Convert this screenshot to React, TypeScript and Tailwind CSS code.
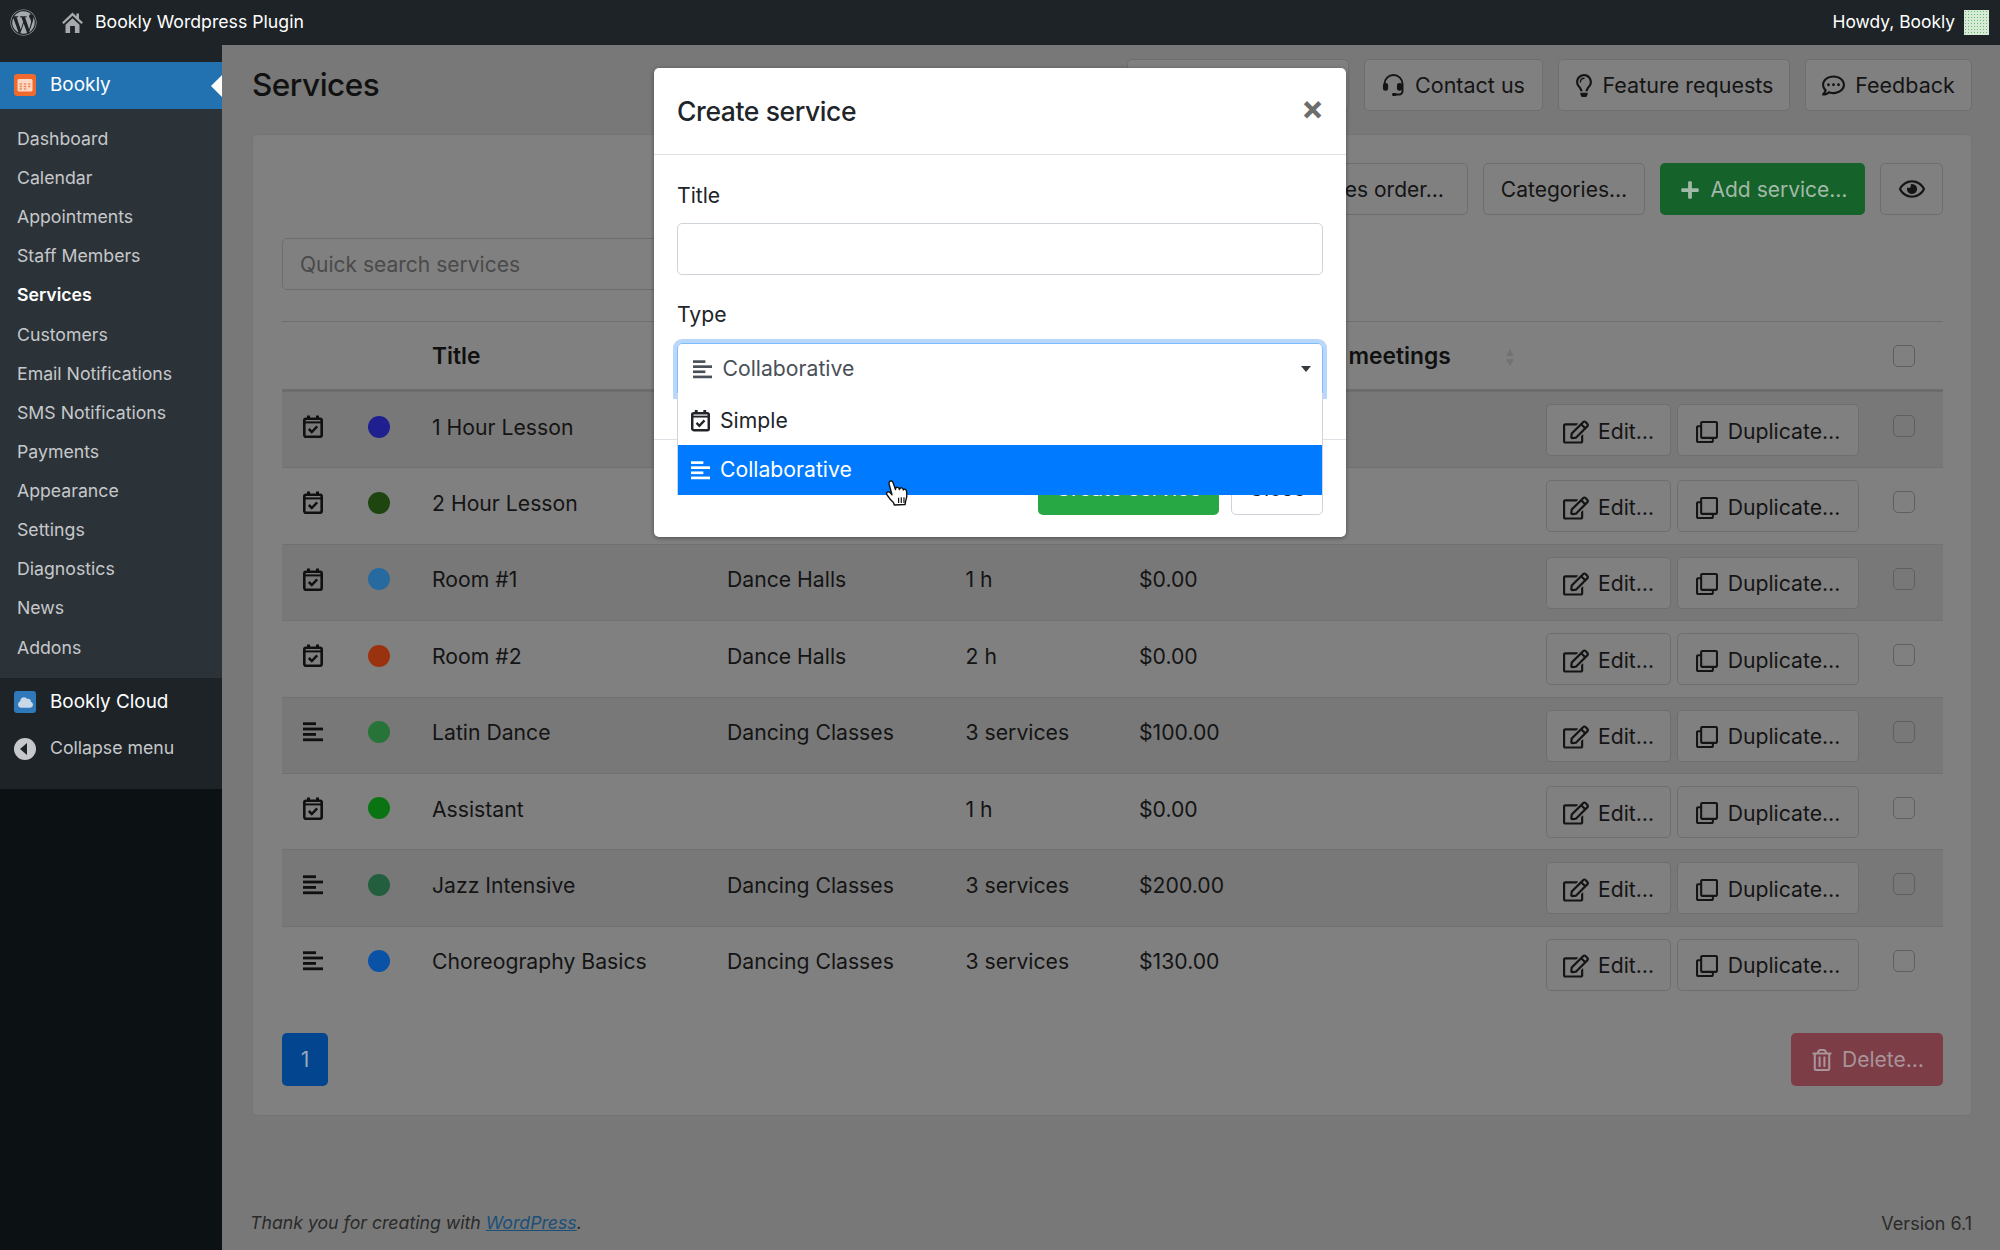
import { FaWordpress, FaCloud, FaRegEdit, FaRegClone, FaRegLightbulb, FaRegCommentDots, FaRegEye, FaRegTrashAlt, FaPlus } from "react-icons/fa";

const MENU = [
  "Dashboard",
  "Calendar",
  "Appointments",
  "Staff Members",
  "Services",
  "Customers",
  "Email Notifications",
  "SMS Notifications",
  "Payments",
  "Appearance",
  "Settings",
  "Diagnostics",
  "News",
  "Addons",
];

type Row = { kind: "simple" | "collab"; color: string; title: string; category: string; duration: string; price: string };

const ROWS: Row[] = [
  { kind: "simple", color: "bg-[#1f1f8f]", title: "1 Hour Lesson", category: "", duration: "1 h", price: "$0.00" },
  { kind: "simple", color: "bg-[#1e4410]", title: "2 Hour Lesson", category: "", duration: "2 h", price: "$0.00" },
  { kind: "simple", color: "bg-[#266a9f]", title: "Room #1", category: "Dance Halls", duration: "1 h", price: "$0.00" },
  { kind: "simple", color: "bg-[#9a320f]", title: "Room #2", category: "Dance Halls", duration: "2 h", price: "$0.00" },
  { kind: "collab", color: "bg-[#287438]", title: "Latin Dance", category: "Dancing Classes", duration: "3 services", price: "$100.00" },
  { kind: "simple", color: "bg-[#0a7412]", title: "Assistant", category: "", duration: "1 h", price: "$0.00" },
  { kind: "collab", color: "bg-[#235f3e]", title: "Jazz Intensive", category: "Dancing Classes", duration: "3 services", price: "$200.00" },
  { kind: "collab", color: "bg-[#0a52a6]", title: "Choreography Basics", category: "Dancing Classes", duration: "3 services", price: "$130.00" },
];

function CalendarIcon({ className }: { className?: string }) {
  return (
    <svg viewBox="0 0 20 23" className={className} fill="none" stroke="currentColor">
      <rect x="1.300" y="3.800" width="17.400" height="17.900" rx="1.600" strokeWidth="2.600" />
      <path d="M1 7.400h18" strokeWidth="2" />
      <path d="M5.500 0.500v4M14.500 0.500v4" strokeWidth="3" />
      <path d="M5.800 14l3 3 5.400-5.600" strokeWidth="2.500" />
    </svg>
  );
}

function LinesIcon({ className }: { className?: string }) {
  return (
    <svg viewBox="0 0 20 20" className={className} fill="currentColor">
      <rect x="0" y="0.300" width="13" height="2.800" />
      <rect x="0" y="5.600" width="20" height="2.800" />
      <rect x="0" y="11" width="13" height="2.800" />
      <rect x="0" y="16.400" width="20" height="2.800" />
    </svg>
  );
}

function HeadsetIcon({ className }: { className?: string }) {
  return (
    <svg viewBox="0 0 24 24" className={className} fill="none" stroke="currentColor">
      <path d="M2.600 13V10.500a9.400 9.400 0 0 1 18.800 0V18a3.400 3.400 0 0 1-3.400 3.400h-4.500" strokeWidth="2" />
      <rect x="1" y="9.500" width="5.400" height="8" rx="2.500" fill="currentColor" stroke="none" />
      <rect x="15.600" y="9.500" width="5.400" height="8" rx="2.500" fill="currentColor" stroke="none" />
      <rect x="10.500" y="19.800" width="4.500" height="3.200" rx="1.400" fill="currentColor" stroke="none" />
    </svg>
  );
}

function HomeIcon({ className }: { className?: string }) {
  return (
    <svg viewBox="0 0 21 21" className={className} fill="currentColor">
      <path d="M10.500 0.500L0 10.500l1.700 1.600 8.800-8.300 8.800 8.300 1.700-1.600-4-3.800V1.500h-2.600v2.700z" />
      <path d="M3.500 12.800l7-6.600 7 6.600V21h-4.600v-7H8.100v7H3.500z" />
    </svg>
  );
}

function BooklyIcon() {
  return (
    <svg viewBox="0 0 22 22" className="h-[22px] w-[22px]">
      <rect width="22" height="22" rx="3" fill="#ef6a2c" />
      <rect x="3.500" y="5" width="15" height="12.500" rx="1.500" fill="#fbd9c6" />
      <path d="M5.500 10h2.500M9.800 10h2.500M14 10h2.500M5.500 12.500h2.500M9.800 12.500h2.500M14 12.500h2.500M5.500 15h2.500M9.800 15h2.500" stroke="#ef8a5c" strokeWidth="1.400" />
    </svg>
  );
}

function HandCursor({ className }: { className?: string }) {
  return (
    <svg viewBox="0 0 22 28" className={className} stroke="#111" strokeWidth="1.300" strokeLinejoin="round">
      <path
        d="M4 2.500c1-1.200 2.800-.7 3.300.8l2.300 6.600c-.2-1.500.9-2.400 2-2.100 1 .2 1.500 1 1.700 2 .1-1.200 1.200-1.900 2.200-1.500.9.300 1.300 1.100 1.400 2 .3-.8 1.200-1.100 1.900-.7.9.5 1.200 1.500 1.300 2.700.2 2.400 0 5.400-.9 7.700l-.7 3.800-10 .5-.8-2.300c-2-1.600-4.800-5.200-6-7.100-.7-1.100-.5-2.200.3-2.700.9-.5 2-.1 3 1l1.300 1.500L3.700 5.100c-.2-1-.2-2 .3-2.600z"
        fill="#fff"
      />
      <path d="M12.500 17.500v5M15 17v5.500M17.500 17v5.500" strokeWidth="1.100" fill="none" />
    </svg>
  );
}

function PlainButton({ children, className = "" }: { children?: React.ReactNode; className?: string }) {
  return (
    <div className={`flex h-[52px] shrink-0 items-center justify-center rounded-[5px] border border-[#6e6e6e] bg-[#808080] text-[#141414] ${className}`}>
      {children}
    </div>
  );
}

function Sidebar() {
  return (
    <aside className="flex w-[222px] shrink-0 flex-col bg-[#0c1214]">
      <div className="h-[17px] bg-[#1d2327]" />
      <div className="relative flex h-[47px] items-center bg-[#2271b1] pl-[14px] text-[18.900px] text-white">
        <BooklyIcon />
        <span className="ml-[14px]">Bookly</span>
        <span className="absolute right-0 top-[13px] h-0 w-0 border-y-[11px] border-r-[11px] border-y-transparent border-r-white" />
      </div>
      <ul className="flex h-[569.500px] flex-col bg-[#2c3338] pt-[11px] text-[17.700px] text-[#c6c8cb]">
        {MENU.map((item) => (
          <li key={item} className={`flex h-[39.150px] items-center pl-[17px] ${item === "Services" ? "font-semibold text-white" : ""}`}>
            {item}
          </li>
        ))}
      </ul>
      <div className="h-[111px] bg-[#1d2327]">
        <div className="mt-[13px] flex h-[22px] items-center pl-[14px] text-[18.900px] text-white">
          <span className="flex h-[22px] w-[22px] items-center justify-center rounded-[3px] bg-[#2f78b9]">
            <FaCloud className="h-[15px] w-[15px] text-[#c9d8e6]" />
          </span>
          <span className="ml-[14px]">Bookly Cloud</span>
        </div>
        <div className="mt-[24.500px] flex h-[22px] items-center pl-[14px] text-[17.700px] text-[#c6c8cb]">
          <span className="flex h-[22px] w-[22px] items-center justify-center rounded-full bg-[#c6c8cb]">
            <span className="mr-[3px] h-0 w-0 border-y-[6px] border-r-[7px] border-y-transparent border-r-[#1d2327]" />
          </span>
          <span className="ml-[14px]">Collapse menu</span>
        </div>
      </div>
    </aside>
  );
}

function ServiceRow({ row, striped, last }: { row: Row; striped: boolean; last: boolean }) {
  return (
    <div className={`flex h-[76.400px] text-[21.200px] text-[#141414] ${striped ? "bg-[#787878]" : ""} ${last ? "" : "border-b border-[#717171]"}`}>
      <div className="flex h-[69px] w-[150px] shrink-0 items-center">
        <span className="flex w-[61px] justify-center pl-[1px]">
          {row.kind === "simple" ? <CalendarIcon className="h-[23px] w-[20px] text-[#101010]" /> : <LinesIcon className="h-[20px] w-[20px] text-[#101010]" />}
        </span>
        <span className={`ml-[25px] h-[22px] w-[22px] rounded-full ${row.color}`} />
      </div>
      <div className="flex h-[71px] w-[295px] shrink-0 items-center">{row.title}</div>
      <div className="flex h-[71px] w-[238.500px] shrink-0 items-center">{row.category}</div>
      <div className="flex h-[71px] w-[173.500px] shrink-0 items-center">{row.duration}</div>
      <div className="flex h-[71px] w-[100px] shrink-0 items-center">{row.price}</div>
      <div className="ml-auto mt-[12px] flex gap-[6px]">
        <PlainButton className="w-[125px] gap-[9px] pt-[3px]">
          <FaRegEdit className="h-[24px] w-[26px]" />
          Edit…
        </PlainButton>
        <PlainButton className="w-[182px] gap-[10px] pt-[3px]">
          <FaRegClone className="h-[22px] w-[22px]" />
          Duplicate…
        </PlainButton>
      </div>
      <div className="ml-[34px] mr-[28px] mt-[23px] h-[22px] w-[22px] rounded-[5px] border border-[#5f5f5f]" />
    </div>
  );
}

function Modal() {
  return (
    <div className="absolute left-[654px] top-[68px] flex h-[469px] w-[692px] flex-col rounded-[5px] bg-white text-[21.200px] text-[#212529] shadow-[0_1px_4px_rgba(0,0,0,0.4)]">
      <div className="flex h-[87px] items-center justify-between border-b border-[#dee2e6] pl-[23px] pr-[22px]">
        <span className="pt-[2px] text-[26.500px] font-medium tracking-[-0.4px]">Create service</span>
        <span className="mb-[7px] text-[34px] font-bold leading-none text-[#6d6d6d]">×</span>
      </div>
      <div className="h-[284px] px-[23px]">
        <div className="mt-[24px] pt-[1px] leading-[30px]">Title</div>
        <div className="mt-[13px] h-[52px] rounded-[5px] border border-[#ced4da]" />
        <div className="mt-[24px] leading-[31px]">Type</div>
        <div className="relative mt-[13px]">
          <div className="flex h-[52px] items-center rounded-t-[5px] border border-[#80bdff] pl-[15px] text-[#495057] shadow-[0_0_0_4px_#b9d7fb]">
            <LinesIcon className="h-[19px] w-[19px]" />
            <span className="ml-[10.500px]">Collaborative</span>
            <span className="absolute right-[12px] top-[23px] h-0 w-0 border-x-[5.500px] border-t-[6.500px] border-x-transparent border-t-[#343a40]" />
          </div>
          <div className="absolute left-0 right-0 top-[50px] flex flex-col border-x border-[#ced4da] bg-white text-[#212529]">
            <div className="flex h-[52px] items-center pl-[13px] pt-[3px]">
              <CalendarIcon className="h-[23px] w-[19px]" />
              <span className="ml-[10px]">Simple</span>
            </div>
            <div className="flex h-[50px] items-center bg-[#007bff] pl-[13px] text-white">
              <LinesIcon className="h-[19px] w-[19px]" />
              <span className="ml-[10px]">Collaborative</span>
            </div>
            <HandCursor className="absolute left-[207px] top-[86px] h-[30px] w-[24px]" />
          </div>
        </div>
      </div>
      <div className="flex h-[98px] justify-end gap-[12px] border-t border-[#dee2e6] pr-[23px] pt-[23px]">
        <div className="flex h-[52px] w-[181px] items-center justify-center rounded-[5px] bg-[#28a745] text-white">Create service</div>
        <div className="flex h-[52px] w-[92px] items-center justify-center rounded-[5px] border border-[#ced4da]">Close</div>
      </div>
    </div>
  );
}

export default function App() {
  return (
    <div className="relative flex h-[1250px] w-[2000px] flex-col overflow-hidden bg-[#787878] font-['Inter',sans-serif]">
      <header className="flex h-[44.500px] shrink-0 items-center bg-[#1d2327] pl-[10px] pr-[11px] text-[17.700px] text-white">
        <FaWordpress className="h-[27px] w-[27px] text-[#a7aaad]" />
        <HomeIcon className="ml-[25px] h-[21px] w-[21px] text-[#a7aaad]" />
        <span className="ml-[12px]">Bookly Wordpress Plugin</span>
        <span className="ml-auto text-[17.400px]">Howdy, Bookly</span>
        <span className="ml-[9px] h-[25px] w-[25px] bg-[radial-gradient(#6fb872_35%,#d5ebd5_40%)] bg-[length:3px_3px]" />
      </header>
      <div className="flex min-h-0 flex-1">
        <Sidebar />
        <main className="flex min-w-0 flex-1 flex-col pl-[30px] pr-[28px] pt-[14.500px]">
          <div className="flex h-[52px] items-center gap-[15px] text-[21.500px] text-[#141414]">
            <h1 className="mr-auto text-[31.500px] font-medium tracking-[-0.5px] text-[#111]">Services</h1>
            <PlainButton className="w-[222px]" />
            <PlainButton className="w-[179px] gap-[10px]">
              <HeadsetIcon className="h-[23px] w-[23px]" />
              Contact us
            </PlainButton>
            <PlainButton className="w-[232px] gap-[10px]">
              <FaRegLightbulb className="h-[23px] w-[18px]" />
              Feature requests
            </PlainButton>
            <PlainButton className="w-[167px] gap-[10px]">
              <FaRegCommentDots className="h-[23px] w-[23px]" />
              Feedback
            </PlainButton>
          </div>
          <section className="mt-[23px] h-[982px] rounded-[5px] border border-[#747474] bg-[#808080] pl-[29px] pr-[28px] pt-[28px]">
            <div className="flex justify-end gap-[15px] text-[21px]">
              <PlainButton className="w-[210px] pt-[1px]">Services order…</PlainButton>
              <PlainButton className="w-[162px] pt-[1px]">Categories…</PlainButton>
              <div className="flex h-[52px] w-[205px] items-center justify-center gap-[11px] rounded-[5px] bg-[#15632a] pl-[2px] pt-[1px] text-[#a3b9a8]">
                <FaPlus className="h-[20px] w-[20px]" />
                Add service…
              </div>
              <PlainButton className="w-[63px]">
                <FaRegEye className="h-[24px] w-[26px]" />
              </PlainButton>
            </div>
            <div className="mt-[23px] flex h-[52px] w-[420px] items-center rounded-[5px] border border-[#6e6e6e] pl-[17px] pt-[1px] text-[21px] text-[#4a4a4a]">
              Quick search services
            </div>
            <div className="mt-[31px] flex h-[71px] border-y border-b-[3px] border-t-[#6f6f6f] border-b-[#6c6c6c] text-[22.800px] font-semibold text-[#101010]">
              <div className="w-[150px] shrink-0" />
              <div className="flex w-[840px] shrink-0 items-center pt-[1px]">Title</div>
              <div className="flex w-[234px] shrink-0 items-center pt-[1px]">Online meetings</div>
              <div className="flex flex-col justify-center gap-[3px] pt-[4px]">
                <span className="h-0 w-0 border-x-[4px] border-b-[7px] border-x-transparent border-b-[#727272]" />
                <span className="h-0 w-0 border-x-[4px] border-t-[7px] border-x-transparent border-t-[#727272]" />
              </div>
              <div className="ml-auto mr-[28px] mt-[23px] h-[22px] w-[22px] rounded-[5px] border border-[#5f5f5f]" />
            </div>
            {ROWS.map((row, i) => (
              <ServiceRow key={row.title} row={row} striped={i % 2 === 0} last={i === ROWS.length - 1} />
            ))}
            <div className="mt-[30px] flex items-start justify-between text-[21px]">
              <div className="flex h-[53px] w-[46px] items-center justify-center rounded-[5px] bg-[#03458f] text-[#9aa7b8]">1</div>
              <div className="flex h-[53px] w-[152px] items-center justify-center gap-[10px] rounded-[5px] bg-[#7d3d47] pl-[2px] text-[#a89499]">
                <FaRegTrashAlt className="h-[22px] w-[20px]" />
                Delete…
              </div>
            </div>
          </section>
          <footer className="mt-[93.500px] flex items-center justify-between text-[17.700px] text-[#2a2a2a]">
            <span className="-ml-[2px] italic">
              Thank you for creating with <span className="text-[#1a4f78] underline">WordPress</span>.
            </span>
            <span className="text-[18px]">Version 6.1</span>
          </footer>
        </main>
      </div>
      <Modal />
    </div>
  );
}
